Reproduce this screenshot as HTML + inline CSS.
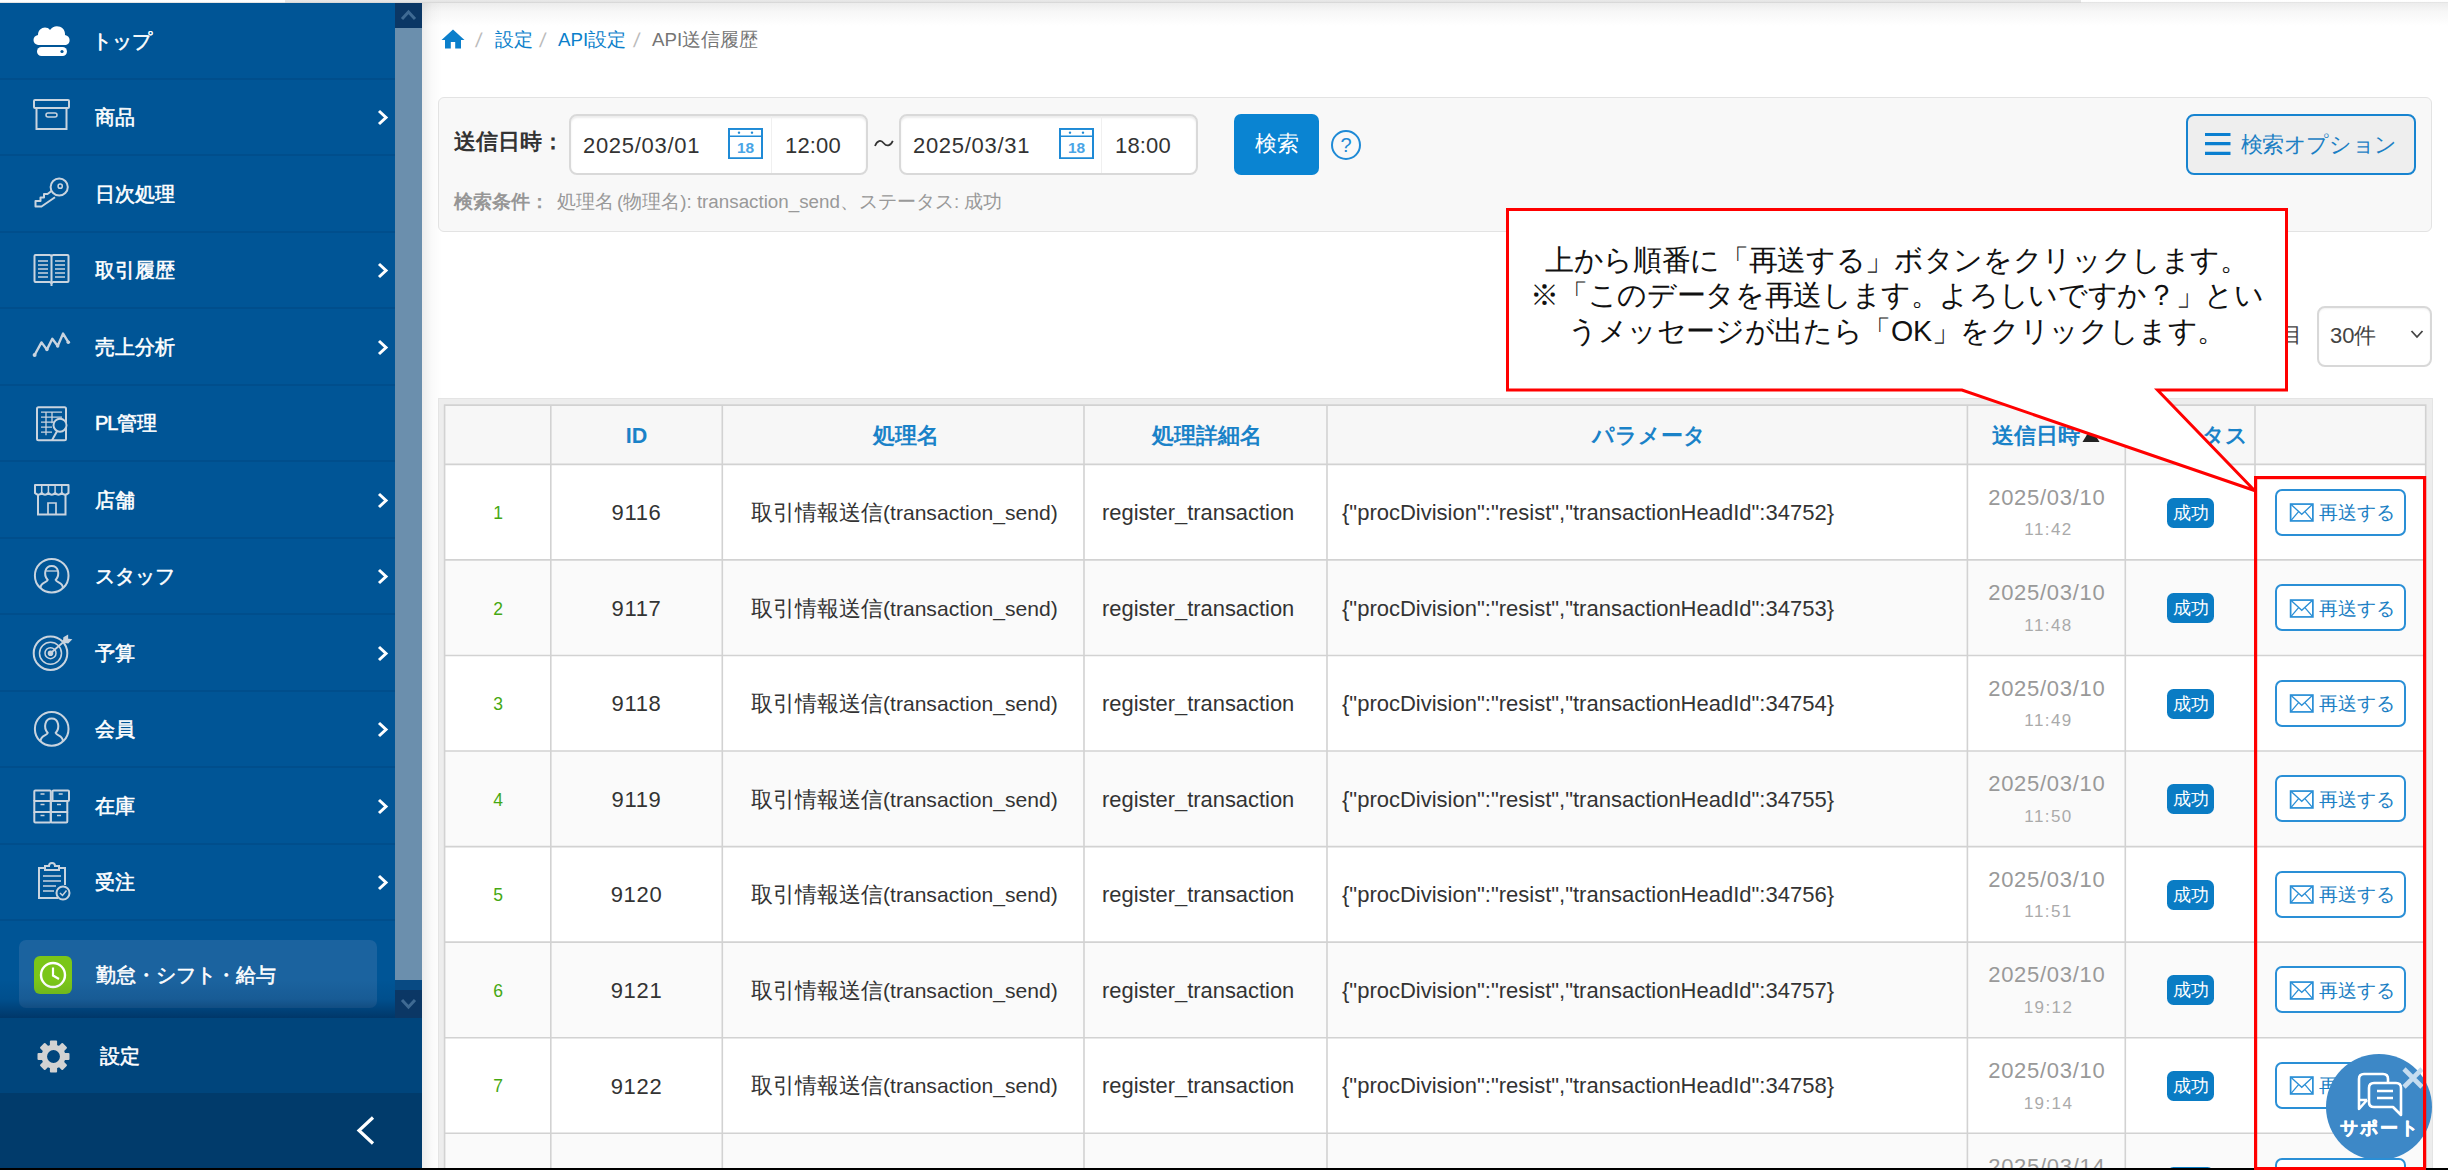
<!DOCTYPE html>
<html lang="ja"><head><meta charset="utf-8"><title>API送信履歴</title><style>
*{box-sizing:border-box;margin:0;padding:0}
html,body{width:2448px;height:1170px;overflow:hidden;background:#fff}
body{font-family:"Liberation Sans",sans-serif;color:#333;position:relative}
.abs{position:absolute}
.t{position:absolute;white-space:nowrap;line-height:30px;height:30px;margin-top:-15px}
.c{transform:translateX(-50%)}
/* sidebar */
#sb{left:0;top:3px;width:395px;height:1015px;background:#005596;overflow:hidden}
.mi{position:absolute;left:0;width:395px;height:77px}
.mi i{position:absolute;left:0;bottom:0;width:395px;height:2px;background:#004e8c}
.mi .lb{position:absolute;left:95px;top:23px;height:30px;line-height:30px;color:#fff;font-size:20px;font-weight:normal;-webkit-text-stroke:.55px #fff;white-space:nowrap}
.mi svg.ic{position:absolute;left:30px;top:17px;width:44px;height:42px}
.mi svg.ar{position:absolute;left:375px;top:29px;width:15px;height:19px}
#track{left:395px;top:3px;width:27px;height:1015px;background:#6b8fad}
#kin{left:19px;top:940px;width:358px;height:68px;border-radius:7px;background:#1b639f}
#set{left:0;top:1018px;width:422px;height:75px;background:#00457c}
#bot{left:0;top:1093px;width:422px;height:77px;background:#013b6b}
/* content */
.bc{font-size:18.7px;color:#0b7fcb}
.sl{font-size:20px;color:#bbb;transform:skewX(-8deg)}
#panel{left:438px;top:97px;width:1994px;height:135px;background:#f8f8f8;border:1px solid #e3e3e3;border-radius:6px}
.inp{top:114px;width:299px;height:61px;background:#fff;border:2px solid #d9d9d9;border-radius:8px;box-shadow:inset 0 2px 2px rgba(0,0,0,.08)}
.dv{top:116px;width:1px;height:57px;background:#f0f0f0}
.f22{font-size:22px;color:#333;letter-spacing:.7px}
.pn{font-size:21.1px;color:#333}
.pd{font-size:21.9px;color:#333}
.pp{font-size:22px;color:#333}
#sbtn{left:1234px;top:114px;width:85px;height:61px;background:#0a84d2;border-radius:7px;color:#fff;font-size:21.5px;text-align:center;line-height:61px}
#help{left:1331px;top:129.5px;width:30px;height:30px;border:2px solid #1e8ad6;border-radius:50%;color:#1e8ad6;font-size:20px;text-align:center;line-height:26px}
#opt{left:2185.5px;top:114px;width:230px;height:61px;background:#eee;border:2px solid #1784d0;border-radius:8px}
#sel{left:2317px;top:306px;width:115px;height:60.5px;background:#fff;border:2px solid #d8d8d8;border-radius:8px;box-shadow:inset 0 1px 2px rgba(0,0,0,.06)}
#wrap{left:437.5px;top:398px;width:1995px;height:780px;background:#ededed;border:1px solid #e4e4e4}
#tb{left:445px;top:405px;width:1981px;height:765px;background:#fff}
.hl{position:absolute;left:445px;width:1981px;height:2px;background:#dadada}
.vl{position:absolute;top:405px;width:2px;height:765px;background:#dadada}
.th{font-size:21.5px;font-weight:bold;color:#1a82c8}
.no{font-size:17.5px;color:#45a812}
.dt{font-size:22px;color:#999;letter-spacing:.7px}
.tm{font-size:17px;color:#aaa;letter-spacing:1.4px}
.bdg{position:absolute;left:2167px;width:47px;height:30px;border-radius:6.5px;background:#0a7cc4;color:#fff;font-size:17.5px;text-align:center;line-height:30px;white-space:nowrap}
.rb{position:absolute;left:2274.5px;width:131.5px;height:47px;border:2px solid #2a8fd6;border-radius:7px;background:#fff}
.rb span{position:absolute;left:42.5px;top:7.5px;height:30px;line-height:30px;font-size:19px;color:#1b7fc4;white-space:nowrap}
.rb svg{position:absolute;left:12px;top:12.5px;width:25.5px;height:19px}
#sup{left:2326px;top:1054px;width:106px;height:106px;border-radius:50%;background:#3d88c7}
</style></head><body>
<div class="abs" style="left:0;top:2px;width:2448px;height:24px;background:linear-gradient(#ebebeb,#f7f7f7 40%,#fff)"></div>
<div class="abs" style="left:0;top:0;width:2448px;height:3px;background:linear-gradient(#fff,#fdfdfd 55%,#d6d6d6)"></div><div class="abs" style="left:285px;top:0;width:1796px;height:3px;background:linear-gradient(#e9e9e9,#e4e4e4 55%,#d2d2d2)"></div>
<div class="abs" style="left:422px;top:3px;width:20px;height:1165px;background:linear-gradient(90deg,rgba(0,0,0,.075),rgba(0,0,0,.02) 50%,rgba(0,0,0,0))"></div>
<div id="sb" class="abs">
<div class="mi" style="top:0.0px"><svg class="ic" viewBox="0 0 44 42"><path d="M8 25 C2 24 2 16 8 15 C8 8 16 5 20 10 C24 3 36 6 35 15 C41 16 41 24 36 25 Z" fill="#fff"/><rect x="7" y="27" width="30" height="9" rx="4.5" fill="#fff"/><circle cx="32" cy="31.5" r="1.6" fill="#005596"/></svg><span class="lb"><span style="margin-left:-3.5px">トップ</span></span><i></i></div>
<div class="mi" style="top:76.45px"><svg class="ic" viewBox="0 0 44 42" fill="none" stroke="#c9d4df" stroke-width="2" ><rect x="4" y="4" width="35" height="8" rx="1"/><path d="M6.5 12 V33 H36.5 V12"/><rect x="16" y="17" width="11" height="4" rx="2" stroke-width="1.5"/></svg><span class="lb">商品</span><svg class="ar" viewBox="0 0 15 19"><path d="M4 3 L11 9.5 L4 16" fill="none" stroke="#fff" stroke-width="3"/></svg><i></i></div>
<div class="mi" style="top:152.9px"><svg class="ic" viewBox="0 0 44 42" fill="none" stroke="#c9d4df" stroke-width="2" ><circle cx="29.2" cy="14" r="8.6"/><circle cx="30.2" cy="13.2" r="2.1" stroke-width="1.5"/><path d="M21.5 18 L17.5 21 H14 V24.5 H10.5 V28 H5.5 V33.5 H11.5 L25 24.2" stroke-linejoin="round"/></svg><span class="lb">日次処理</span><i></i></div>
<div class="mi" style="top:229.35px"><svg class="ic" viewBox="0 0 44 42" fill="none" stroke="#c9d4df" stroke-width="2" ><path d="M5.5 6 H19.5 Q21.5 6 21.5 8 Q21.5 6 23.5 6 H37.5 Q38.5 6 38.5 7 V32 Q38.5 33 37.5 33 H23.5 Q21.5 33 21.5 35 Q21.5 33 19.5 33 H5.5 Q4.5 33 4.5 32 V7 Q4.5 6 5.5 6 Z"/><path d="M21.5 8 V37"/><path d="M8 12 H18 M8 16 H18 M8 20 H18 M8 24 H18 M8 28 H18 M25 12 H35 M25 16 H35 M25 20 H35 M25 24 H35 M25 28 H35" stroke-width="1.4"/></svg><span class="lb">取引履歴</span><svg class="ar" viewBox="0 0 15 19"><path d="M4 3 L11 9.5 L4 16" fill="none" stroke="#fff" stroke-width="3"/></svg><i></i></div>
<div class="mi" style="top:305.8px"><svg class="ic" viewBox="0 0 44 42" fill="none" stroke="#c9d4df" stroke-width="2" ><path d="M4.6 29 L11.5 16.4 L16.9 23.6 L22.3 12.8 L27.7 20 L33.1 7.6 L38.3 16.2" stroke-width="2.4" stroke-linejoin="round" stroke-linecap="round"/><g fill="#c9d4df" stroke="none"><circle cx="4.6" cy="29" r="2"/><circle cx="38.3" cy="16.2" r="1.8"/><circle cx="16.9" cy="23.6" r="1.7"/><circle cx="27.7" cy="20" r="1.7"/></g></svg><span class="lb">売上分析</span><svg class="ar" viewBox="0 0 15 19"><path d="M4 3 L11 9.5 L4 16" fill="none" stroke="#fff" stroke-width="3"/></svg><i></i></div>
<div class="mi" style="top:382.25px"><svg class="ic" viewBox="0 0 44 42" fill="none" stroke="#c9d4df" stroke-width="2" ><g transform="translate(0,1.2)"><rect x="7" y="4" width="29" height="33" rx="1.5"/><path d="M11 9 H32 M11 14 H32 M11 19 H24 M11 24 H22 M11 29 H22 M16 9 V32 M22 9 V20" stroke-width="1.3"/><circle cx="30" cy="22" r="6.5" fill="#005596"/><path d="M27 28 L22 37" stroke-width="2"/></g></svg><span class="lb"><span style="letter-spacing:-1px">PL</span>管理</span><i></i></div>
<div class="mi" style="top:458.7px"><svg class="ic" viewBox="0 0 44 42" fill="none" stroke="#c9d4df" stroke-width="2" ><path d="M5 6 H38.5 V14 Q35 17.5 31.8 14 Q28.5 17.5 25.1 14 Q21.8 17.5 18.4 14 Q15 17.5 11.7 14 Q8.4 17.5 5 14 Z" stroke-linejoin="round"/><path d="M11.7 6 V14 M18.4 6 V14 M25.1 6 V14 M31.8 6 V14" stroke-width="1.5"/><path d="M8 16 V35.5 H35.5 V16"/><path d="M18 35 V24 H26 V35" stroke-width="1.7"/></svg><span class="lb">店舗</span><svg class="ar" viewBox="0 0 15 19"><path d="M4 3 L11 9.5 L4 16" fill="none" stroke="#fff" stroke-width="3"/></svg><i></i></div>
<div class="mi" style="top:535.15px"><svg class="ic" viewBox="0 0 44 42" fill="none" stroke="#c9d4df" stroke-width="2" ><circle cx="21.7" cy="20.7" r="16.8"/><path d="M10.5 33 C10.5 27 16.5 28 17.7 25 C13 19.5 15 11 21.7 11 C28.4 11 30.4 19.5 25.7 25 C26.9 28 32.9 27 32.9 33"/><path d="M16.2 16 H27.2" stroke-width="1.3"/></svg><span class="lb">スタッフ</span><svg class="ar" viewBox="0 0 15 19"><path d="M4 3 L11 9.5 L4 16" fill="none" stroke="#fff" stroke-width="3"/></svg><i></i></div>
<div class="mi" style="top:611.6px"><svg class="ic" viewBox="0 0 44 42" fill="none" stroke="#c9d4df" stroke-width="2" ><g transform="translate(0.5,-1.8)"><circle cx="20" cy="23" r="16.8"/><circle cx="20" cy="23" r="11" stroke-width="1.5"/><circle cx="20" cy="23" r="5.5" stroke-width="1.5"/><circle cx="20" cy="23" r="1.8" fill="#c9d4df"/><path d="M20 23 L35 10" stroke-width="1.8"/><path d="M33 12 L33.5 7.5 L37 5.5 L37 9 L40.5 9.5 L37.5 12.5 Z" stroke-width="1.3" fill="#c9d4df"/></g></svg><span class="lb">予算</span><svg class="ar" viewBox="0 0 15 19"><path d="M4 3 L11 9.5 L4 16" fill="none" stroke="#fff" stroke-width="3"/></svg><i></i></div>
<div class="mi" style="top:688.05px"><svg class="ic" viewBox="0 0 44 42" fill="none" stroke="#c9d4df" stroke-width="2" ><circle cx="21.7" cy="20.9" r="16.8"/><path d="M10.5 33.3 C10.5 27 16.5 28 17.7 25 C13 19.5 15 10.5 21.7 10.5 C28.4 10.5 30.4 19.5 25.7 25 C26.9 28 32.9 27 32.9 33.3"/></svg><span class="lb">会員</span><svg class="ar" viewBox="0 0 15 19"><path d="M4 3 L11 9.5 L4 16" fill="none" stroke="#fff" stroke-width="3"/></svg><i></i></div>
<div class="mi" style="top:764.5px"><svg class="ic" viewBox="0 0 44 42" fill="none" stroke="#c9d4df" stroke-width="2" ><rect x="4.3" y="5.5" width="16.5" height="10.5" rx="1"/><rect x="22.5" y="5.5" width="16.5" height="10.5" rx="1"/><rect x="4.3" y="16" width="16.5" height="11"/><rect x="20.8" y="16" width="16.5" height="11"/><rect x="4.3" y="27" width="16.5" height="10.5" rx="1"/><rect x="20.8" y="27" width="16.5" height="10.5" rx="1"/><path d="M10.5 9 H14.5 M28.7 9 H32.7 M10.5 19.5 H14.5 M27 19.5 H31 M10.5 30.5 H14.5 M27 30.5 H31" stroke-width="1.4"/></svg><span class="lb">在庫</span><svg class="ar" viewBox="0 0 15 19"><path d="M4 3 L11 9.5 L4 16" fill="none" stroke="#fff" stroke-width="3"/></svg><i></i></div>
<div class="mi" style="top:840.95px"><svg class="ic" viewBox="0 0 44 42" fill="none" stroke="#c9d4df" stroke-width="2" ><path d="M15 7 H9 V37 H28"/><path d="M29 7 H35 V24"/><path d="M15 9 V5 H19 C19 1 25 1 25 5 H29 V9 Z"/><path d="M13 15 H31 M13 20 H31 M13 25 H26 M13 30 H24" stroke-width="1.4"/><circle cx="33" cy="32" r="6.5" fill="#005596"/><path d="M30 32 L32.5 34.5 L36.5 29.5" stroke-width="1.5"/></svg><span class="lb">受注</span><svg class="ar" viewBox="0 0 15 19"><path d="M4 3 L11 9.5 L4 16" fill="none" stroke="#fff" stroke-width="3"/></svg><i></i></div>
</div>
<div id="track" class="abs"></div>
<div class="abs" style="left:395px;top:3px;width:27px;height:25px;background:#0b3765"><svg style="position:absolute;left:5px;top:6px" width="17" height="12" viewBox="0 0 17 12"><path d="M2 10 L8.5 3 L15 10" fill="none" stroke="#3f6a93" stroke-width="3"/></svg></div>
<div class="abs" style="left:395px;top:979.5px;width:27px;height:11px;background:#084a83"></div>
<div class="abs" style="left:395px;top:990px;width:27px;height:28px;background:#0b3765"><svg style="position:absolute;left:5px;top:8px" width="17" height="12" viewBox="0 0 17 12"><path d="M2 2 L8.5 9 L15 2" fill="none" stroke="#3f6a93" stroke-width="3"/></svg></div>
<div id="kin" class="abs"><div class="abs" style="left:15px;top:15.5px;width:38px;height:38px;border-radius:6px;background:#7bc618"><svg width="38" height="38" viewBox="0 0 38 38"><circle cx="19" cy="19" r="12" fill="none" stroke="#fff" stroke-width="2.4"/><path d="M19 11.5 V19.5 L25 23" fill="none" stroke="#fff" stroke-width="2.2"/></svg></div><span class="t" style="left:77px;top:34.5px;font-size:20px;color:#fff;-webkit-text-stroke:.55px #fff">勤怠・シフト・給与</span></div>
<div class="abs" style="left:0;top:980px;width:395px;height:38px;background:linear-gradient(rgba(0,35,75,0),rgba(0,35,75,.12) 50%,rgba(0,35,75,.6))"></div>
<div id="set" class="abs"><svg style="position:absolute;left:37px;top:21.5px" width="33" height="33" viewBox="-16.5 -16.5 33 33"><g fill="#d2d2d2"><rect x="-3.6" y="-16" width="7.2" height="9" rx="1" transform="rotate(0)"/><rect x="-3.6" y="-16" width="7.2" height="9" rx="1" transform="rotate(45)"/><rect x="-3.6" y="-16" width="7.2" height="9" rx="1" transform="rotate(90)"/><rect x="-3.6" y="-16" width="7.2" height="9" rx="1" transform="rotate(135)"/><rect x="-3.6" y="-16" width="7.2" height="9" rx="1" transform="rotate(180)"/><rect x="-3.6" y="-16" width="7.2" height="9" rx="1" transform="rotate(225)"/><rect x="-3.6" y="-16" width="7.2" height="9" rx="1" transform="rotate(270)"/><rect x="-3.6" y="-16" width="7.2" height="9" rx="1" transform="rotate(315)"/></g><circle r="9.2" fill="none" stroke="#d2d2d2" stroke-width="5.5"/></svg><span class="t" style="left:100px;top:38px;font-size:20px;color:#fff;-webkit-text-stroke:.55px #fff">設定</span></div>
<div id="bot" class="abs"><svg style="position:absolute;left:354px;top:21px" width="24" height="33" viewBox="0 0 24 33"><path d="M19 3.5 L5 16.5 L19 29.5" fill="none" stroke="#fff" stroke-width="3.2"/></svg></div>
<svg class="abs" style="left:441px;top:29px" width="24" height="20" viewBox="0 0 24 20"><path d="M12 0.5 L23.5 11 H20 V19.5 H14.2 V13 H9.8 V19.5 H4 V11 H0.5 Z" fill="#0b7fcb"/></svg>
<span class="t sl" style="left:476px;top:40px">/</span><span class="t bc" style="left:495px;top:40px">設定</span><span class="t sl" style="left:540px;top:40px">/</span><span class="t bc" style="left:558px;top:40px">API設定</span><span class="t sl" style="left:634px;top:40px">/</span><span class="t bc" style="left:652px;top:40px;color:#757575">API送信履歴</span>
<div id="panel" class="abs"></div>
<span class="t" style="left:454px;top:142px;font-size:22px;font-weight:bold;color:#333">送信日時：</span>
<div class="inp abs" style="left:569px"></div><div class="dv abs" style="left:771px"></div>
<span class="t f22" style="left:583px;top:145.5px">2025/03/01</span><span class="t f22" style="left:785px;top:145.5px;letter-spacing:.15px">12:00</span>
<svg class="abs" style="left:728px;top:128px" width="35" height="31.2" viewBox="0 0 35 32" preserveAspectRatio="none"><rect x="1" y="1" width="33" height="30" fill="#fff" stroke="#1e8ad6" stroke-width="2"/><path d="M1 8.5 H34" stroke="#1e8ad6" stroke-width="1.6"/><circle cx="11" cy="4.8" r="1.2" fill="#1e8ad6"/><circle cx="24" cy="4.8" r="1.2" fill="#1e8ad6"/><text x="17.5" y="25.5" text-anchor="middle" font-family="Liberation Sans, sans-serif" font-size="15.5" font-weight="bold" fill="#4aa5e6">18</text></svg>
<div class="inp abs" style="left:899px"></div><div class="dv abs" style="left:1101px"></div>
<span class="t f22" style="left:913px;top:145.5px">2025/03/31</span><span class="t f22" style="left:1115px;top:145.5px;letter-spacing:.15px">18:00</span>
<svg class="abs" style="left:1059px;top:128px" width="35" height="31.2" viewBox="0 0 35 32" preserveAspectRatio="none"><rect x="1" y="1" width="33" height="30" fill="#fff" stroke="#1e8ad6" stroke-width="2"/><path d="M1 8.5 H34" stroke="#1e8ad6" stroke-width="1.6"/><circle cx="11" cy="4.8" r="1.2" fill="#1e8ad6"/><circle cx="24" cy="4.8" r="1.2" fill="#1e8ad6"/><text x="17.5" y="25.5" text-anchor="middle" font-family="Liberation Sans, sans-serif" font-size="15.5" font-weight="bold" fill="#4aa5e6">18</text></svg>
<svg class="abs" style="left:873.5px;top:138px" width="20" height="11" viewBox="0 0 20 11"><path d="M1 8 C3 2.2 7 1.6 9.8 5.2 C12.4 8.6 16.4 8.4 18.8 2.8" fill="none" stroke="#333" stroke-width="1.7"/></svg>
<div id="sbtn" class="abs">検索</div><div id="help" class="abs">?</div>
<span class="t" style="left:454px;top:201.5px;font-size:18.8px;color:#999"><b style="color:#969696">検索条件：</b>&nbsp;<span style="margin-left:2.5px;margin-right:-2px">処理名</span> (物理名): transaction_send、ステータス: 成功</span>
<div id="opt" class="abs"><svg class="abs" style="left:16.5px;top:15px" width="28" height="26" viewBox="0 0 28 26"><path d="M1 3.5 H26.5 M1 12.7 H26.5 M1 22.3 H26.5" stroke="#0a7fd0" stroke-width="3.2"/></svg><span class="t" style="left:53px;top:28.8px;font-size:21.5px;letter-spacing:-.35px;color:#1b7fc4">検索オプション</span></div>
<span class="t" style="left:2281px;top:335px;font-size:21px;color:#444">目</span>
<div id="sel" class="abs"><span class="t" style="left:11px;top:27.5px;font-size:22px;color:#444">30件</span><svg class="abs" style="left:89.5px;top:20.7px" width="16" height="11" viewBox="0 0 16 11"><path d="M2.5 2 L8 8 L13.5 2" fill="none" stroke="#444" stroke-width="1.8"/></svg></div>
<div id="wrap" class="abs"></div><div id="tb" class="abs"></div>
<div class="abs" style="left:445px;top:405px;width:1981px;height:59.5px;background:#f7f7f7"></div>
<div class="abs" style="left:445px;top:559.9px;width:1981px;height:95.6px;background:#fafafa"></div>
<div class="abs" style="left:445px;top:751.0px;width:1981px;height:95.6px;background:#fafafa"></div>
<div class="abs" style="left:445px;top:942.1px;width:1981px;height:95.6px;background:#fafafa"></div>
<div class="abs" style="left:445px;top:1133.2px;width:1981px;height:95.6px;background:#fafafa"></div>
<svg class="abs" style="left:0;top:0" width="2448" height="1170" viewBox="0 0 2448 1170"><path d="M444 405.1 H2426.5 M444 464.4 H2426.5 M444 559.9 H2426.5 M444 655.5 H2426.5 M444 751.0 H2426.5 M444 846.6 H2426.5 M444 942.1 H2426.5 M444 1037.7 H2426.5 M444 1133.2 H2426.5 M444.6 404.4 V1170 M550.8 404.4 V1170 M722.3 404.4 V1170 M1084.0 404.4 V1170 M1327.0 404.4 V1170 M1967.4 404.4 V1170 M2125.3 404.4 V1170 M2255.0 404.4 V1170 M2425.7 404.4 V1170 " fill="none" stroke="#d2d2d2" stroke-width="1.6"/></svg>
<span class="t th c" style="left:636.5px;top:436px">ID</span>
<span class="t th c" style="left:905.5px;top:436px">処理名</span>
<span class="t th c" style="left:1207.3px;top:436px">処理詳細名</span>
<span class="t th c" style="left:1649px;top:436px">パラメータ</span>
<span class="t th c" style="left:2190.5px;top:436px">ステータス</span>
<span class="t th" style="left:1992px;top:436px">送信日時</span><svg class="abs" style="left:2082px;top:427px" width="18" height="16" viewBox="0 0 18 16"><path d="M9 1 L17.5 15 H0.5 Z" fill="#222"/></svg>
<span class="t no c" style="left:498px;top:513.0px">1</span>
<span class="t f22 c" style="left:636.5px;top:513.2px">9116</span>
<span class="t pn" style="left:751px;top:513.0px"><span style="font-size:22px">取引情報送信</span>(transaction_send)</span>
<span class="t pd" style="left:1102px;top:513.0px">register_transaction</span>
<span class="t pp" style="left:1342px;top:513.0px">{"procDivision":"resist","transactionHeadId":34752}</span>
<span class="t dt c" style="left:2046.8px;top:497.7px">2025/03/10</span><span class="t tm c" style="left:2048.5px;top:530.2px">11:42</span>
<div class="bdg" style="top:497.6px">成功</div>
<div class="rb" style="top:488.6px"><svg viewBox="0 0 27 21"><rect x="1.2" y="1.2" width="24.6" height="18.6" fill="none" stroke="#2a8fd6" stroke-width="1.9"/><path d="M1.5 1.5 L13.5 12.5 L25.5 1.5 M1.5 19.5 L10 9.5 M25.5 19.5 L17 9.5" fill="none" stroke="#2a8fd6" stroke-width="1.45"/></svg><span>再送する</span></div>
<span class="t no c" style="left:498px;top:608.5px">2</span>
<span class="t f22 c" style="left:636.5px;top:608.7px">9117</span>
<span class="t pn" style="left:751px;top:608.5px"><span style="font-size:22px">取引情報送信</span>(transaction_send)</span>
<span class="t pd" style="left:1102px;top:608.5px">register_transaction</span>
<span class="t pp" style="left:1342px;top:608.5px">{"procDivision":"resist","transactionHeadId":34753}</span>
<span class="t dt c" style="left:2046.8px;top:593.2px">2025/03/10</span><span class="t tm c" style="left:2048.5px;top:625.7px">11:48</span>
<div class="bdg" style="top:593.1px">成功</div>
<div class="rb" style="top:584.1px"><svg viewBox="0 0 27 21"><rect x="1.2" y="1.2" width="24.6" height="18.6" fill="none" stroke="#2a8fd6" stroke-width="1.9"/><path d="M1.5 1.5 L13.5 12.5 L25.5 1.5 M1.5 19.5 L10 9.5 M25.5 19.5 L17 9.5" fill="none" stroke="#2a8fd6" stroke-width="1.45"/></svg><span>再送する</span></div>
<span class="t no c" style="left:498px;top:704.1px">3</span>
<span class="t f22 c" style="left:636.5px;top:704.3px">9118</span>
<span class="t pn" style="left:751px;top:704.1px"><span style="font-size:22px">取引情報送信</span>(transaction_send)</span>
<span class="t pd" style="left:1102px;top:704.1px">register_transaction</span>
<span class="t pp" style="left:1342px;top:704.1px">{"procDivision":"resist","transactionHeadId":34754}</span>
<span class="t dt c" style="left:2046.8px;top:688.8px">2025/03/10</span><span class="t tm c" style="left:2048.5px;top:721.3px">11:49</span>
<div class="bdg" style="top:688.7px">成功</div>
<div class="rb" style="top:679.7px"><svg viewBox="0 0 27 21"><rect x="1.2" y="1.2" width="24.6" height="18.6" fill="none" stroke="#2a8fd6" stroke-width="1.9"/><path d="M1.5 1.5 L13.5 12.5 L25.5 1.5 M1.5 19.5 L10 9.5 M25.5 19.5 L17 9.5" fill="none" stroke="#2a8fd6" stroke-width="1.45"/></svg><span>再送する</span></div>
<span class="t no c" style="left:498px;top:799.6px">4</span>
<span class="t f22 c" style="left:636.5px;top:799.8px">9119</span>
<span class="t pn" style="left:751px;top:799.6px"><span style="font-size:22px">取引情報送信</span>(transaction_send)</span>
<span class="t pd" style="left:1102px;top:799.6px">register_transaction</span>
<span class="t pp" style="left:1342px;top:799.6px">{"procDivision":"resist","transactionHeadId":34755}</span>
<span class="t dt c" style="left:2046.8px;top:784.3px">2025/03/10</span><span class="t tm c" style="left:2048.5px;top:816.8px">11:50</span>
<div class="bdg" style="top:784.2px">成功</div>
<div class="rb" style="top:775.2px"><svg viewBox="0 0 27 21"><rect x="1.2" y="1.2" width="24.6" height="18.6" fill="none" stroke="#2a8fd6" stroke-width="1.9"/><path d="M1.5 1.5 L13.5 12.5 L25.5 1.5 M1.5 19.5 L10 9.5 M25.5 19.5 L17 9.5" fill="none" stroke="#2a8fd6" stroke-width="1.45"/></svg><span>再送する</span></div>
<span class="t no c" style="left:498px;top:895.2px">5</span>
<span class="t f22 c" style="left:636.5px;top:895.4px">9120</span>
<span class="t pn" style="left:751px;top:895.2px"><span style="font-size:22px">取引情報送信</span>(transaction_send)</span>
<span class="t pd" style="left:1102px;top:895.2px">register_transaction</span>
<span class="t pp" style="left:1342px;top:895.2px">{"procDivision":"resist","transactionHeadId":34756}</span>
<span class="t dt c" style="left:2046.8px;top:879.9px">2025/03/10</span><span class="t tm c" style="left:2048.5px;top:912.4px">11:51</span>
<div class="bdg" style="top:879.8px">成功</div>
<div class="rb" style="top:870.8px"><svg viewBox="0 0 27 21"><rect x="1.2" y="1.2" width="24.6" height="18.6" fill="none" stroke="#2a8fd6" stroke-width="1.9"/><path d="M1.5 1.5 L13.5 12.5 L25.5 1.5 M1.5 19.5 L10 9.5 M25.5 19.5 L17 9.5" fill="none" stroke="#2a8fd6" stroke-width="1.45"/></svg><span>再送する</span></div>
<span class="t no c" style="left:498px;top:990.7px">6</span>
<span class="t f22 c" style="left:636.5px;top:990.9px">9121</span>
<span class="t pn" style="left:751px;top:990.7px"><span style="font-size:22px">取引情報送信</span>(transaction_send)</span>
<span class="t pd" style="left:1102px;top:990.7px">register_transaction</span>
<span class="t pp" style="left:1342px;top:990.7px">{"procDivision":"resist","transactionHeadId":34757}</span>
<span class="t dt c" style="left:2046.8px;top:975.4px">2025/03/10</span><span class="t tm c" style="left:2048.5px;top:1007.9px">19:12</span>
<div class="bdg" style="top:975.3px">成功</div>
<div class="rb" style="top:966.3px"><svg viewBox="0 0 27 21"><rect x="1.2" y="1.2" width="24.6" height="18.6" fill="none" stroke="#2a8fd6" stroke-width="1.9"/><path d="M1.5 1.5 L13.5 12.5 L25.5 1.5 M1.5 19.5 L10 9.5 M25.5 19.5 L17 9.5" fill="none" stroke="#2a8fd6" stroke-width="1.45"/></svg><span>再送する</span></div>
<span class="t no c" style="left:498px;top:1086.3px">7</span>
<span class="t f22 c" style="left:636.5px;top:1086.5px">9122</span>
<span class="t pn" style="left:751px;top:1086.3px"><span style="font-size:22px">取引情報送信</span>(transaction_send)</span>
<span class="t pd" style="left:1102px;top:1086.3px">register_transaction</span>
<span class="t pp" style="left:1342px;top:1086.3px">{"procDivision":"resist","transactionHeadId":34758}</span>
<span class="t dt c" style="left:2046.8px;top:1071.0px">2025/03/10</span><span class="t tm c" style="left:2048.5px;top:1103.5px">19:14</span>
<div class="bdg" style="top:1070.9px">成功</div>
<div class="rb" style="top:1061.9px"><svg viewBox="0 0 27 21"><rect x="1.2" y="1.2" width="24.6" height="18.6" fill="none" stroke="#2a8fd6" stroke-width="1.9"/><path d="M1.5 1.5 L13.5 12.5 L25.5 1.5 M1.5 19.5 L10 9.5 M25.5 19.5 L17 9.5" fill="none" stroke="#2a8fd6" stroke-width="1.45"/></svg><span>再送する</span></div>
<span class="t no c" style="left:498px;top:1181.8px">8</span>
<span class="t f22 c" style="left:636.5px;top:1182.0px">9123</span>
<span class="t pn" style="left:751px;top:1181.8px"><span style="font-size:22px">取引情報送信</span>(transaction_send)</span>
<span class="t pd" style="left:1102px;top:1181.8px">register_transaction</span>
<span class="t pp" style="left:1342px;top:1181.8px">{"procDivision":"resist","transactionHeadId":34759}</span>
<span class="t dt c" style="left:2046.8px;top:1166.5px">2025/03/14</span><span class="t tm c" style="left:2048.5px;top:1199.0px">10:05</span>
<div class="bdg" style="top:1166.5px">成功</div>
<div id="sup" class="abs"><svg class="abs" style="left:28px;top:17px" width="52" height="50" viewBox="0 0 52 50"><path d="M13 29 H5 L5 38 L13 29 M5 34 V8 Q5 3 10 3 H29 Q34 3 34 8 V11" fill="none" stroke="#fff" stroke-width="2.6" stroke-linejoin="round"/><path d="M20 12 H42 Q47 12 47 17 V44 L39 36 H20 Q15 36 15 31 V17 Q15 12 20 12 Z" fill="#3d88c7" stroke="#fff" stroke-width="2.6" stroke-linejoin="round"/><path d="M23 20 H39 M23 27 H39" stroke="#fff" stroke-width="2.6"/></svg><span class="t" style="left:14px;top:74px;font-size:18px;font-weight:bold;color:#fff;letter-spacing:1.9px;-webkit-text-stroke:.5px #fff">サポート</span><svg class="abs" style="left:75px;top:12px" width="24" height="24" viewBox="0 0 24 24"><path d="M3 3 L21 21 M21 3 L3 21" stroke="#c5dcf0" stroke-width="4.6"/></svg></div>
<div class="rb" style="top:1157.5px"><svg viewBox="0 0 27 21"><rect x="1.2" y="1.2" width="24.6" height="18.6" fill="none" stroke="#2a8fd6" stroke-width="1.9"/><path d="M1.5 1.5 L13.5 12.5 L25.5 1.5 M1.5 19.5 L10 9.5 M25.5 19.5 L17 9.5" fill="none" stroke="#2a8fd6" stroke-width="1.45"/></svg><span>再送する</span></div>
<svg class="abs" style="left:0;top:0" width="2448" height="1170" viewBox="0 0 2448 1170"><path d="M1507.5 209.5 H2286.5 V390 H2157.5 L2254.5 490.5 L1962 390 H1507.5 Z" fill="#fff" stroke="#f00" stroke-width="3" stroke-linejoin="miter"/><rect x="2255.6" y="477.6" width="169" height="700" fill="none" stroke="#f00" stroke-width="3.2"/></svg>
<div class="abs" style="left:1509px;top:243.2px;width:776px;text-align:center;font-size:28.6px;letter-spacing:-.35px;line-height:35.3px;color:#111;white-space:nowrap">上から順番に「再送する」ボタンをクリックします。<br>※「このデータを再送します。よろしいですか？」とい<br>うメッセージが出たら「OK」をクリックします。</div>
<div class="abs" style="left:0;top:1167.5px;width:2254px;height:3px;background:#000"></div><div class="abs" style="left:2426px;top:1167.5px;width:22px;height:3px;background:#000"></div><div class="abs" style="left:2254px;top:1167px;width:172px;height:3px;background:#f00"></div>
</body></html>
